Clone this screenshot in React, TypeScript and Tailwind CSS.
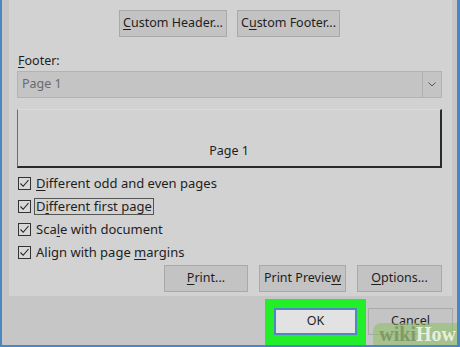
import type { ReactNode } from 'react'

function Mn({ children }: { children: ReactNode }) {
  return <span className="underline underline-offset-2 decoration-1">{children}</span>
}

function Btn({ children, className = '' }: { children: ReactNode; className?: string }) {
  return (
    <div
      className={`h-[27px] flex items-center justify-center bg-[#c3c3c3] border border-[#a9a9a9] text-[12.5px] text-[#1e1e1e] ${className}`}
    >
      {children}
    </div>
  )
}

function Check({ children, focused = false }: { children: ReactNode; focused?: boolean }) {
  return (
    <div className="h-[23px] flex items-center">
      <div className="w-[13px] h-[13px] border border-[#333] bg-[#d8d8d8] flex items-center justify-center">
        <svg width="11" height="11" viewBox="0 0 11 11">
          <path d="M1.5 5.5 L4.2 8.3 L9.5 2" fill="none" stroke="#222" strokeWidth="1.1" />
        </svg>
      </div>
      <span
        className={`ml-[3px] px-[1px] text-[13px] text-[#1e1e1e] leading-[15px] ${focused ? 'border border-[#555]' : 'border border-transparent'}`}
      >
        {children}
      </span>
    </div>
  )
}

export default function App() {
  return (
    <div
      className="w-[460px] h-[347px] overflow-hidden bg-[#c6c6c6] border-l-2 border-r-[3px] border-b-2 border-[#4a86bf] flex flex-col relative"
      style={{ fontFamily: '"Noto Sans", "Open Sans", sans-serif' }}
    >
      {/* tab panel */}
      <div className="ml-[7px] mr-[5px] h-[299px] bg-[#d2d2d2] pl-[8px] pr-[10px] pt-[10px] flex flex-col">
        <div className="flex justify-center gap-[10px]">
          <Btn className="w-[108px]">
            <Mn>C</Mn>ustom Header...
          </Btn>
          <Btn className="w-[103px]">
            C<Mn>u</Mn>stom Footer...
          </Btn>
        </div>

        <div className="mt-[15px] h-[17px] pl-[1px] text-[12.5px] text-[#1e1e1e] leading-[17px]">
          <Mn>F</Mn>ooter:
        </div>
        <div className="h-[27px] mt-[2px] flex border border-[#b3b3b3] bg-[#c4c4c4]">
          <div className="flex-1 flex items-center pl-[4px] text-[12.5px] text-[#6a6a6a]">Page 1</div>
          <div className="w-[19px] border-l border-[#aeaeae] flex items-center justify-center">
            <svg width="8" height="5" viewBox="0 0 8 5">
              <path d="M0.5 0.5 L4 4 L7.5 0.5" fill="none" stroke="#555" strokeWidth="1" />
            </svg>
          </div>
        </div>

        <div className="mt-[11px] h-[59px] border-l border-r-2 border-b-2 border-t border-t-[#dcdcdc] border-l-[#6a6a6a] border-r-[#2a2a2a] border-b-[#2a2a2a] flex items-end justify-center pb-[5px]">
          <span className="text-[12.5px] text-[#1e1e1e]">Page 1</span>
        </div>

        <div className="mt-[4px] pl-[1px] flex flex-col">
          <Check>
            <Mn>D</Mn>ifferent odd and even pages
          </Check>
          <Check focused>
            D<Mn>i</Mn>fferent first page
          </Check>
          <Check>
            Sca<Mn>l</Mn>e with document
          </Check>
          <Check>
            Align with page <Mn>m</Mn>argins
          </Check>
        </div>

        <div className="mt-[1px] flex justify-end gap-[11px]">
          <Btn className="w-[84px]">
            <Mn>P</Mn>rint...
          </Btn>
          <Btn className="w-[87px]">
            Print Previe<Mn>w</Mn>
          </Btn>
          <Btn className="w-[85px]">
            <Mn>O</Mn>ptions...
          </Btn>
        </div>
      </div>

      {/* dialog buttons */}
      <div className="flex-1 flex items-start pt-[3px] pl-[263px] gap-[2px]">
        <div className="w-[101px] h-[46px] bg-[#22ee2a] pt-[9px] pl-[9px]">
          <div className="w-[83px] h-[27px] bg-[#e2e2e2] border-2 border-[#4f87c4] flex items-center justify-center text-[12.5px] text-[#1e1e1e]">
            OK
          </div>
        </div>
        <div className="mt-[9px] w-[85px] h-[27px] bg-[#c4c4c4] border border-[#a9a9a9] flex items-center justify-center text-[12.5px] text-[#1e1e1e]">
          Cancel
        </div>
      </div>

      {/* watermark */}
      <div className="absolute right-0 bottom-0 w-[84px] h-[22px] bg-[#8dc060]/55 rounded-tl-[8px] flex items-center justify-end pr-[1px]">
        <span
          className="text-[20px] leading-none font-bold"
          style={{ fontFamily: '"Liberation Serif", serif' }}
        >
          <span className="text-[#7f9a66]">wiki</span>
          <span className="text-[#e6efdd]">How</span>
        </span>
      </div>
    </div>
  )
}
